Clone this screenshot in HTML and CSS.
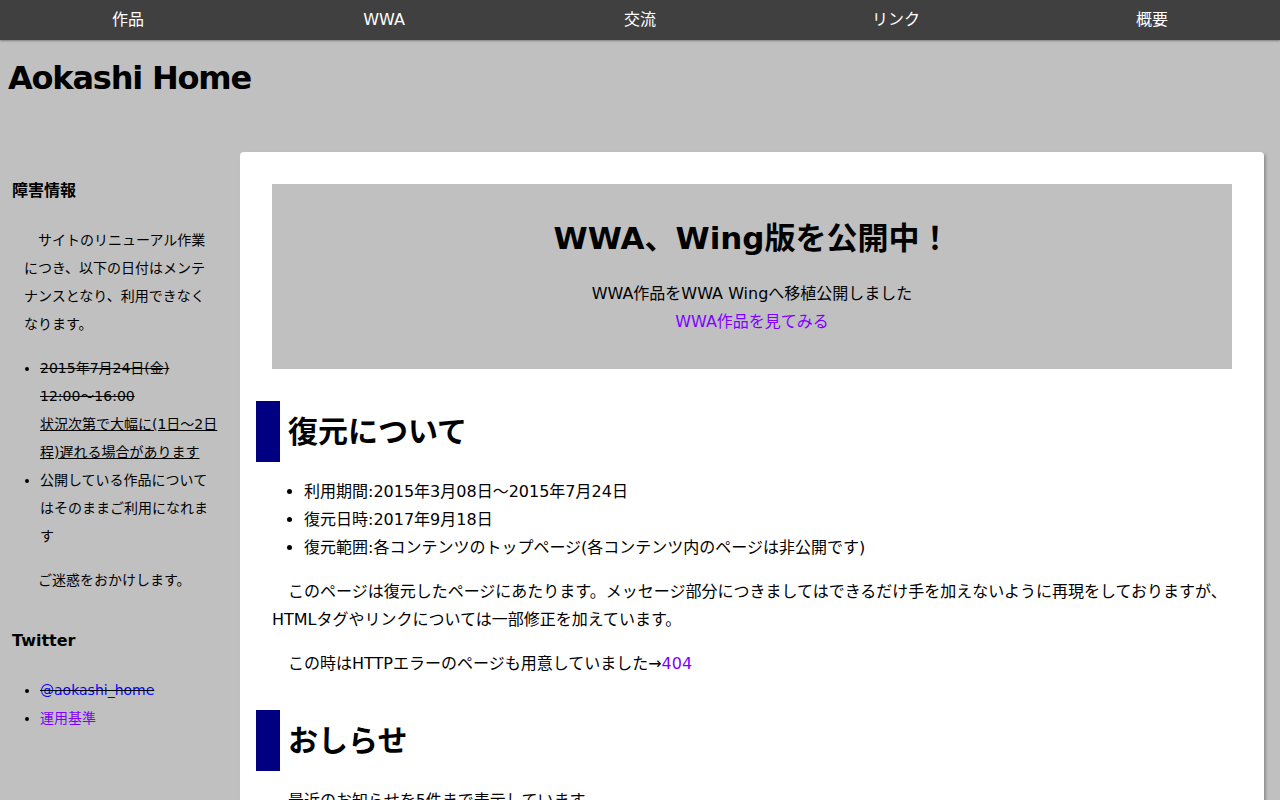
FILE: index.html
```html
<!DOCTYPE html>
<html lang="ja">
<head>
<meta charset="utf-8">
<title>Aokashi Home</title>
<link rel="stylesheet" href="styles.css">
</head>
<body>
<nav class="topnav">
  <a class="topnav-item" href="#">作品</a>
  <a class="topnav-item" href="#">WWA</a>
  <a class="topnav-item" href="#">交流</a>
  <a class="topnav-item" href="#">リンク</a>
  <a class="topnav-item" href="#">概要</a>
</nav>
<header class="site-header">
  <h1 class="site-title">Aokashi Home</h1>
</header>
<div class="layout">
  <aside class="sidebar">
    <section class="side-section">
      <h3 class="side-title">障害情報</h3>
      <p class="side-text">サイトのリニューアル作業につき、以下の日付はメンテナンスとなり、利用できなくなります。</p>
      <ul class="side-list">
        <li><del>2015年7月24日(金)<br>12:00～16:00</del><br><ins>状況次第で大幅に(1日～2日程)遅れる場合があります</ins></li>
        <li>公開している作品についてはそのままご利用になれます</li>
      </ul>
      <p class="side-text">ご迷惑をおかけします。</p>
    </section>
    <section class="side-section">
      <h3 class="side-title">Twitter</h3>
      <ul class="side-list">
        <li><del><a class="link" href="#">@aokashi_home</a></del></li>
        <li><a class="link visited" href="#">運用基準</a></li>
      </ul>
    </section>
  </aside>
  <main class="card">
    <div class="banner">
      <h2 class="banner-title">WWA、Wing版を公開中！</h2>
      <p class="banner-text">WWA作品をWWA Wingへ移植公開しました<br><a class="link visited" href="#">WWA作品を見てみる</a></p>
    </div>
    <h2 class="section-title">復元について</h2>
    <ul class="main-list">
      <li>利用期間:2015年3月08日～2015年7月24日</li>
      <li>復元日時:2017年9月18日</li>
      <li>復元範囲:各コンテンツのトップページ(各コンテンツ内のページは非公開です)</li>
    </ul>
    <p class="main-text">このページは復元したページにあたります。メッセージ部分につきましてはできるだけ手を加えないように再現をしておりますが、HTMLタグやリンクについては一部修正を加えています。</p>
    <p class="main-text">この時はHTTPエラーのページも用意していました→<a class="link visited" href="#">404</a></p>
    <h2 class="section-title">おしらせ</h2>
    <p class="main-text">最近のお知らせを5件まで表示しています。</p>
    <ul class="main-list">
      <li>2015年7月24日 サイトのリニューアルを行いました</li>
      <li>2015年7月20日 WWA作品を更新しました</li>
      <li>2015年7月10日 リンクを追加しました</li>
    </ul>
  </main>
</div>
</body>
</html>
```

FILE: styles.css
```css
html, body {
  margin: 0;
  padding: 0;
}

body {
  background: #c0c0c0;
  color: #000;
  font-family: "DejaVu Sans", "Noto Sans CJK JP", sans-serif;
  font-size: 16px;
  line-height: 28px;
}

.topnav {
  display: flex;
  height: 40px;
  background: #404040;
  box-shadow: 0 1px 2px rgba(0, 0, 0, 0.35);
}

.topnav-item {
  flex: 1;
  text-align: center;
  color: #fff;
  text-decoration: none;
  line-height: 39px;
  font-size: 16px;
}

.site-header {
  height: 112px;
  box-sizing: border-box;
  padding: 14px 8px 0;
}

.site-title {
  margin: 0;
  font-size: 32px;
  line-height: 48px;
  font-weight: bold;
  letter-spacing: -1.2px;
}

.layout {
  display: flex;
  align-items: flex-start;
  padding-right: 16px;
}

.sidebar {
  flex: 0 0 240px;
  box-sizing: border-box;
  padding: 25px 12px 24px;
  font-size: 14px;
  line-height: 28px;
}

.side-section > :last-child {
  margin-bottom: 0;
}

.side-section + .side-section {
  margin-top: 33px;
}

.side-title {
  margin: 0 0 21px;
  font-size: 16px;
  line-height: 28px;
  font-weight: bold;
}

.side-text {
  margin: 0 12px 16px;
  text-indent: 1em;
}

.side-list {
  margin: 16px 8px 16px 0;
  padding-left: 28px;
}

.side-list del {
  text-decoration: line-through;
}

.side-list ins {
  text-decoration: underline;
}

.link {
  color: #0000ff;
  text-decoration: none;
}

.link.visited {
  color: #8000ff;
}

.card {
  flex: 1;
  background: #fff;
  border-radius: 4px;
  box-shadow: 2px 2px 3px rgba(0, 0, 0, 0.25);
  padding: 32px;
  min-height: 800px;
}

.banner {
  background: #c0c0c0;
  padding: 16px;
  text-align: center;
}

.banner-title {
  margin: 14px 0 18px;
  font-size: 31px;
  line-height: 48px;
  font-weight: bold;
}

.banner-text {
  margin: 0 0 17px;
}

.section-title {
  margin: 32px 0 16px -16px;
  padding: 8px 0 8px 8px;
  border-left: 24px solid #000080;
  font-size: 30px;
  line-height: 45px;
  font-weight: bold;
}

.main-list {
  margin: 16px 0;
  padding-left: 32px;
}

.main-text {
  margin: 16px 0;
  text-indent: 1em;
}
```
